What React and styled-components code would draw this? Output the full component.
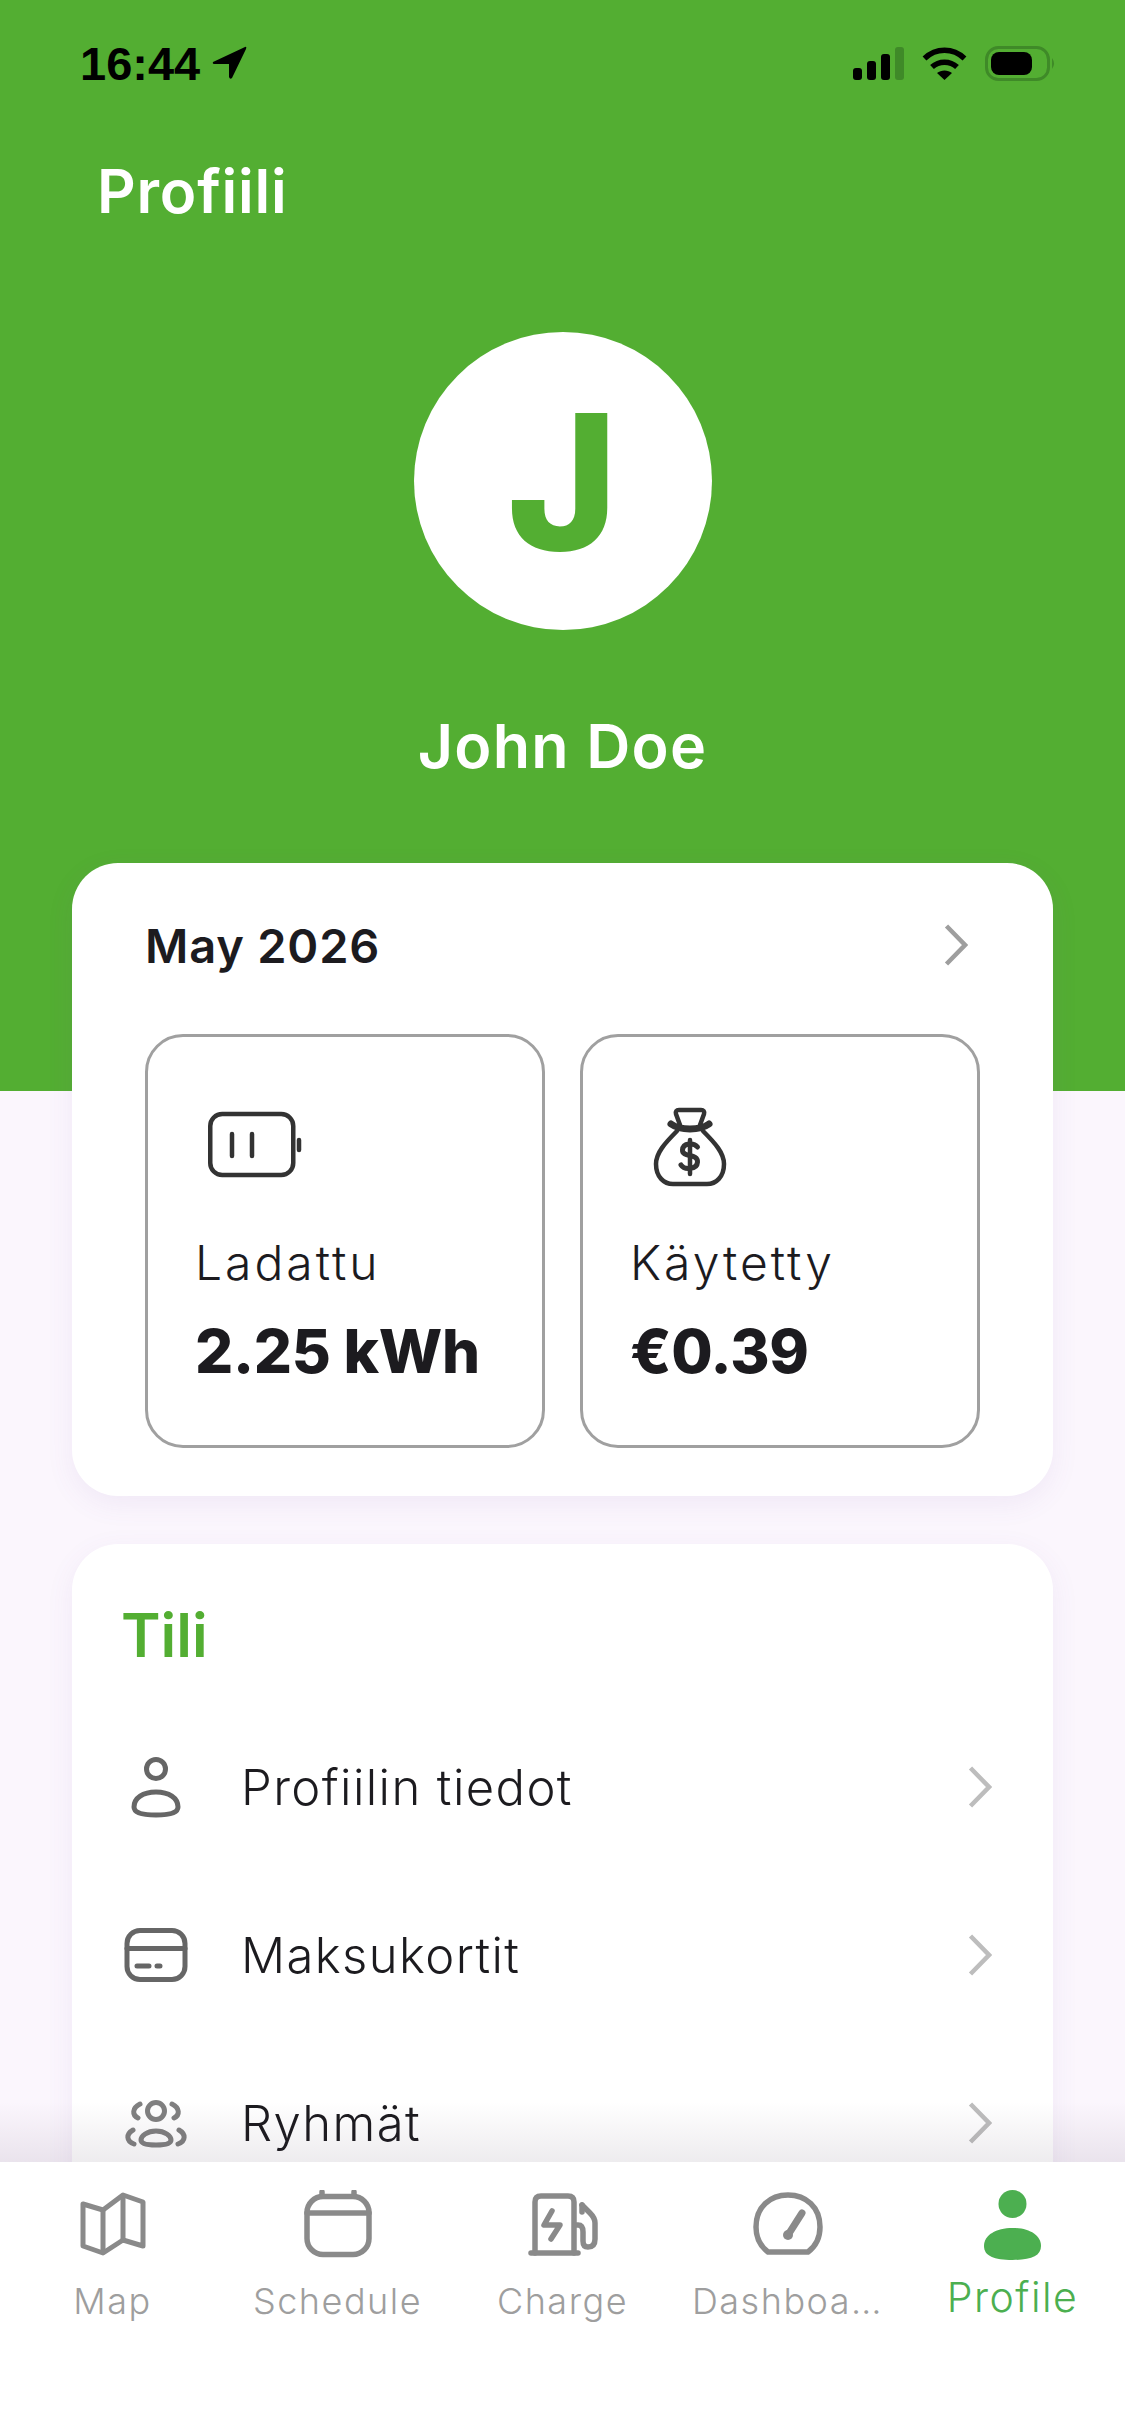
import React from "react";
import styled, { createGlobalStyle } from "styled-components";

const GREEN = "#53ae32";
const INK = "#1c1b1f";

const GlobalStyle = createGlobalStyle`
    html, body {
        margin: 0;
        padding: 0;
        background: #fff;
    }
    * {
        box-sizing: border-box;
    }
`;

export default function App() {
    return (
        <Screen>
            <GlobalStyle/>
            <Content>
                <StatusBar>
                    <Clock>
                        16:44
                        <LocationArrow/>
                    </Clock>
                    <StatusIcons>
                        <Signal/>
                        <Wifi/>
                        <Battery/>
                    </StatusIcons>
                </StatusBar>
                <PageTitle>Profiili</PageTitle>
                <Avatar>J</Avatar>
                <UserName>John Doe</UserName>

                <Card>
                    <MonthRow>
                        <MonthLabel>May 2026</MonthLabel>
                        <Chevron color="#9e9e9e"/>
                    </MonthRow>
                    <Tiles>
                        <Tile>
                            <TileIcon $indent={13}><ChargedIcon/></TileIcon>
                            <TileLabel>Ladattu</TileLabel>
                            <TileValue>2.25 kWh</TileValue>
                        </Tile>
                        <Tile>
                            <TileIcon $indent={23}><MoneyBagIcon/></TileIcon>
                            <TileLabel>Käytetty</TileLabel>
                            <TileValue>€0.39</TileValue>
                        </Tile>
                    </Tiles>
                </Card>

                <AccountCard>
                    <SectionTitle>Tili</SectionTitle>
                    <MenuRow>
                        <MenuIcon><PersonIcon/></MenuIcon>
                        <MenuLabel>Profiilin tiedot</MenuLabel>
                        <Chevron color="#bdbdbd"/>
                    </MenuRow>
                    <MenuRow>
                        <MenuIcon><PaymentCardIcon/></MenuIcon>
                        <MenuLabel>Maksukortit</MenuLabel>
                        <Chevron color="#bdbdbd"/>
                    </MenuRow>
                    <MenuRow>
                        <MenuIcon><GroupIcon/></MenuIcon>
                        <MenuLabel>Ryhmät</MenuLabel>
                        <Chevron color="#bdbdbd"/>
                    </MenuRow>
                </AccountCard>
            </Content>

            <TabBar>
                <Tab>
                    <TabIcon><MapIcon/></TabIcon>
                    <TabLabel>Map</TabLabel>
                </Tab>
                <Tab>
                    <TabIcon><CalendarIcon/></TabIcon>
                    <TabLabel>Schedule</TabLabel>
                </Tab>
                <Tab>
                    <TabIcon><ChargerIcon/></TabIcon>
                    <TabLabel>Charge</TabLabel>
                </Tab>
                <Tab>
                    <TabIcon><GaugeIcon/></TabIcon>
                    <TabLabel>Dashboa…</TabLabel>
                </Tab>
                <Tab>
                    <TabIcon><ProfileFilledIcon/></TabIcon>
                    <TabLabel $active>Profile</TabLabel>
                </Tab>
            </TabBar>
        </Screen>
    );
}

/* ====== ICONS ====== */

function LocationArrow() {
    return (
        <svg width="35" height="34" viewBox="0 0 35 34">
            <path d="M33 1 L1 16 Q0 18 3 18 L17 18 L17 31 Q18 34 20 32 L34 3 Q35 0 33 1Z" fill="#000"/>
        </svg>
    );
}

function Signal() {
    return (
        <svg width="51" height="33" viewBox="0 0 51 33">
            <rect x="0" y="21" width="9" height="12" rx="3" fill="#000"/>
            <rect x="14" y="14" width="9" height="19" rx="3" fill="#000"/>
            <rect x="28" y="7" width="9" height="26" rx="3" fill="#000"/>
            <rect x="42" y="0" width="9" height="33" rx="3" fill="#3f8a28"/>
        </svg>
    );
}

function Wifi() {
    return (
        <svg width="45" height="33" viewBox="0 0 45 33" fill="none" stroke="#000" strokeWidth="5.5">
            <path d="M2.5 11.5 C14 0.5 31 0.5 42.5 11.5"/>
            <path d="M10 20 C17 13.5 28 13.5 35 20"/>
            <path d="M15 26 L22.5 33 L30 26 C26 22.5 19 22.5 15 26Z" fill="#000" stroke="none"/>
        </svg>
    );
}

function Battery() {
    return (
        <svg width="71" height="35" viewBox="0 0 71 35">
            <rect x="1.5" y="1.5" width="62" height="32" rx="12" fill="none" stroke="#3f8a28" strokeWidth="3"/>
            <rect x="6" y="6" width="41" height="23" rx="8" fill="#000"/>
            <path d="M67 12 Q71 17.5 67 23Z" fill="#3f8a28"/>
        </svg>
    );
}

function Chevron({color}) {
    return (
        <svg width="24" height="42" viewBox="0 0 24 42" fill="none" stroke={color} strokeWidth="4.5">
            <path d="M2.5 2 L21 21 L2.5 40"/>
        </svg>
    );
}

function ChargedIcon() {
    return (
        <svg width="96" height="80" viewBox="0 0 96 80" fill="none" stroke="#333" strokeWidth="4.5" strokeLinecap="round">
            <rect x="2.25" y="7" width="83" height="61" rx="12"/>
            <path d="M24 27 V49 M44 27 V49"/>
            <path d="M91 33 V43"/>
        </svg>
    );
}

function MoneyBagIcon() {
    return (
        <svg width="74" height="80" viewBox="0 0 74 80" fill="none" stroke="#333" strokeWidth="4.5" strokeLinecap="round" strokeLinejoin="round">
            <path d="M27 18 L23 7 Q22 3 26 3 L48 3 Q52 3 51 7 L47 18"/>
            <path d="M18 17 Q25 22 37 22 Q49 22 56 17" strokeWidth="7"/>
            <path d="M24 24 C12 36 3 46 3 57 C3 70 11 77 20 77 L54 77 C63 77 71 70 71 57 C71 46 62 36 50 24"/>
            <path d="M44.5 40 C41 35.5 30 35.5 29.5 43 C29 51 45 46 44.5 55 C44 63 31 63 28 58" strokeWidth="5"/>
            <path d="M37 33 V67" strokeWidth="4.5"/>
        </svg>
    );
}

function PersonIcon() {
    return (
        <svg width="68" height="64" viewBox="0 -2 68 64" fill="none" stroke="#666" strokeWidth="5">
            <circle cx="34" cy="12" r="9.5"/>
            <path d="M34 35 C21 35 12 41 12 50 C12 56 20 58 34 58 C48 58 56 56 56 50 C56 41 47 35 34 35Z"/>
        </svg>
    );
}

function PaymentCardIcon() {
    return (
        <svg width="68" height="54" viewBox="0 0 68 54" fill="none" stroke="#666" strokeWidth="5" strokeLinecap="round">
            <rect x="5" y="2.5" width="58" height="49" rx="13"/>
            <path d="M5 20.5 H63"/>
            <path d="M15 38 H27 M35 38 H38"/>
        </svg>
    );
}

function GroupIcon() {
    return (
        <svg width="68" height="50" viewBox="0 -2 68 50" fill="none" stroke="#808080" strokeWidth="5" strokeLinecap="round">
            <circle cx="34" cy="11" r="8.5"/>
            <path d="M34 31 C25 31 19 36 19 40 C19 44 25 45 34 45 C43 45 49 44 49 40 C49 36 43 31 34 31Z"/>
            <path d="M18 4 C10 8 10 15 16 18 M50 4 C58 8 58 15 52 18"/>
            <path d="M11 30 C4 34 4 41 12 44 M57 30 C64 34 64 41 56 44"/>
        </svg>
    );
}

function MapIcon() {
    return (
        <svg width="68" height="68" viewBox="0 0 68 68" fill="none" stroke="#8a8a8a" strokeWidth="5" strokeLinejoin="round">
            <path d="M4 14 L24 20 L44 5 L64 12 V56 L44 50 L24 63 L4 56Z"/>
            <path d="M24 20 V63 M44 5 V50"/>
        </svg>
    );
}

function CalendarIcon() {
    return (
        <svg width="68" height="68" viewBox="0 0 68 68" fill="none" stroke="#8a8a8a" strokeWidth="5.5" strokeLinecap="round">
            <rect x="3" y="6.5" width="62" height="58" rx="16"/>
            <path d="M3 23 H65"/>
            <path d="M18 2 V6 M50 2 V6"/>
        </svg>
    );
}

function ChargerIcon() {
    return (
        <svg width="70" height="66" viewBox="0 -3 70 66" fill="none" stroke="#8a8a8a" strokeWidth="5.5" strokeLinecap="round" strokeLinejoin="round">
            <path d="M7 60 V9 Q7 3 13 3 L40 3 Q46 3 46 9 V60"/>
            <path d="M3 60 H50"/>
            <path d="M24 18 L16 32 H32 L23 46"/>
            <path d="M47 32 H50 Q55 32 55 39 V48 Q55 54 60 54 Q67 54 67 46 V30 Q67 25 62 20 L54 12"/>
            <path d="M54 19 L54 12"/>
        </svg>
    );
}

function GaugeIcon() {
    return (
        <svg width="70" height="68" viewBox="0 -2 70 68" fill="none" stroke="#8a8a8a" strokeWidth="5.5" strokeLinecap="round">
            <path d="M15 60 C7 54 3 45 3 35 C3 15 17 3 35 3 C53 3 67 15 67 35 C67 45 63 54 55 60 Z" strokeLinecap="butt"/>
            <path d="M35 43 L49 21" strokeWidth="7"/>
            <circle cx="35" cy="43" r="5" fill="#8a8a8a" stroke="none"/>
        </svg>
    );
}

function ProfileFilledIcon() {
    return (
        <svg width="57" height="70" viewBox="0 0 57 70" fill="#4caf50">
            <circle cx="28.5" cy="14" r="14"/>
            <path d="M28.5 38 C12 38 0 45 0 56 C0 66 10 70 28.5 70 C47 70 57 66 57 56 C57 45 45 38 28.5 38Z"/>
        </svg>
    );
}

/* ====== STYLES ====== */

const FONT = `Inter, "Noto Sans", sans-serif`;

const Screen = styled.div`
    width: 1125px;
    height: 2436px;
    display: flex;
    flex-direction: column;
    overflow: hidden;
    font-family: ${FONT};
    color: ${INK};
`;

/* le fond vert s'arrête derrière la première carte */
const Content = styled.main`
    flex: 1;
    min-height: 0;
    overflow: hidden;
    background: linear-gradient(${GREEN} 1091px, #fbf6fd 1091px);
`;

const StatusBar = styled.div`
    display: flex;
    justify-content: space-between;
    align-items: flex-start;
    padding: 46px 69px 0 80px;
    height: 80px;
`;

const Clock = styled.div`
    display: flex;
    align-items: center;
    gap: 12px;
    height: 34px;
    font-family: "Liberation Sans", sans-serif;
    font-weight: 700;
    font-size: 47px;
    color: #000;
`;

const StatusIcons = styled.div`
    display: flex;
    align-items: center;
    gap: 18px;
`;

const PageTitle = styled.h1`
    margin: 76px 0 0 97px;
    font-size: 60px;
    line-height: 70px;
    font-weight: 600;
    color: #fff;
    letter-spacing: 0.8px;
`;

const Avatar = styled.div`
    width: 298px;
    height: 298px;
    margin: 106px auto 0;
    border-radius: 50%;
    background: #fff;
    color: ${GREEN};
    display: flex;
    align-items: center;
    justify-content: center;
    font-size: 188px;
    font-weight: 800;
`;

const UserName = styled.div`
    margin-top: 80px;
    text-align: center;
    font-size: 61px;
    line-height: 72px;
    font-weight: 600;
    color: #fff;
    letter-spacing: 1.2px;
`;

const Card = styled.section`
    margin: 81px 72px 0;
    padding: 50px 73px 48px;
    border-radius: 46px;
    background: #fff;
    box-shadow: 0 8px 28px rgba(120, 80, 160, 0.08);
`;

const MonthRow = styled.div`
    display: flex;
    justify-content: space-between;
    align-items: center;
    height: 64px;
    padding-right: 12px;
    margin-bottom: 57px;
`;

const MonthLabel = styled.div`
    font-size: 47px;
    font-weight: 600;
    letter-spacing: 0.8px;
`;

const Tiles = styled.div`
    display: grid;
    grid-template-columns: 1fr 1fr;
    gap: 35px;
`;

const Tile = styled.div`
    height: 414px;
    padding: 70px 10px 0 47px;
    border: 3px solid #a0a0a0;
    border-radius: 38px;
`;

const TileIcon = styled.div`
    height: 80px;
    display: flex;
    align-items: center;
    margin: 0 0 48px ${({$indent}) => $indent}px;
`;

const TileLabel = styled.div`
    font-size: 48px;
    line-height: 56px;
    font-weight: 300;
    letter-spacing: 3px;
`;

const TileValue = styled.div`
    margin-top: 25px;
    font-size: 60px;
    line-height: 70px;
    font-weight: 800;
    letter-spacing: -0.3px;
`;

const AccountCard = styled.section`
    margin: 48px 72px 0;
    padding: 56px 61px 60px 49px;
    border-radius: 46px 46px 0 0;
    background: #fff;
    box-shadow: 0 8px 28px rgba(120, 80, 160, 0.08);
`;

const SectionTitle = styled.h2`
    margin: 0 0 33px;
    font-size: 60px;
    line-height: 70px;
    font-weight: 600;
    color: ${GREEN};
`;

const MenuRow = styled.div`
    height: 168px;
    display: flex;
    align-items: center;
`;

const MenuIcon = styled.div`
    width: 68px;
    display: flex;
    justify-content: center;
    margin: 0 51px 0 1px;
`;

const MenuLabel = styled.div`
    flex: 1;
    font-size: 49px;
    font-weight: 300;
    letter-spacing: 1.4px;
`;

const TabBar = styled.nav`
    position: relative;
    flex: 0 0 274px;
    padding-top: 28px;
    display: grid;
    grid-template-columns: repeat(5, 1fr);
    align-items: start;
    background: #fff;

    /* ombre dégradée au-dessus de la barre */
    &::before {
        content: "";
        position: absolute;
        left: 0;
        right: 0;
        top: -60px;
        height: 60px;
        background: linear-gradient(rgba(60, 40, 70, 0), rgba(60, 40, 70, 0.09));
    }
`;

const Tab = styled.div`
    display: flex;
    flex-direction: column;
    align-items: center;
    min-width: 0;
`;

const TabIcon = styled.div`
    height: 80px;
    display: flex;
    align-items: flex-start;
    justify-content: center;
`;

const TabLabel = styled.div`
    margin-top: ${({$active}) => ($active ? "3px" : "7px")};
    white-space: nowrap;
    line-height: 48px;
    font-size: ${({$active}) => ($active ? "41px" : "36px")};
    font-weight: 300;
    color: ${({$active}) => ($active ? "#4caf50" : "#9e9e9e")};
    letter-spacing: 1.5px;
`;
